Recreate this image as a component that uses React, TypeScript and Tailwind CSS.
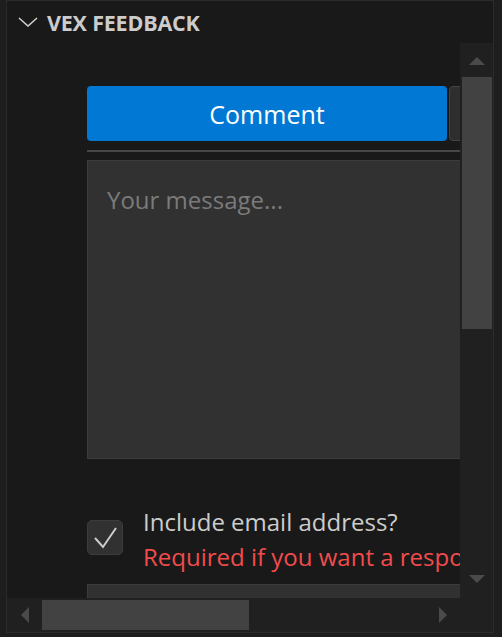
import React from 'react';

const font = { fontFamily: '"Open Sans", "Noto Sans", sans-serif' };

const App: React.FC = () => {
  return (
    <div className="w-[502px] h-[637px] bg-[#1e1e1e] pl-[6px] pr-[8px] pb-[4px] overflow-hidden" style={font}>
      <div className="h-full flex flex-col bg-[#191919] border border-[#2b2b2b]">
        {/* Header */}
        <div className="h-[42px] flex items-center pl-[11px] gap-[9px] shrink-0">
          <svg width="20" height="10" viewBox="0 0 20 10" fill="none">
            <path d="M1 1 L10 9 L19 1" stroke="#cccccc" strokeWidth="1.6" />
          </svg>
          <span className="text-[21.5px] font-bold text-[#cccccc] tracking-[-0.2px] leading-none mt-[1px]">VEX FEEDBACK</span>
        </div>

        {/* Body */}
        <div className="flex-1 flex min-h-0">
          <div className="flex-1 flex flex-col min-w-0">
            <div className="flex-1 overflow-hidden pl-[80px] pt-[43px]">
              <div className="w-[560px]">
                <div className="flex gap-[2px]">
                  <button className="w-[360px] h-[55px] rounded-[4px] bg-[#0078d4] text-white text-[25px] flex items-center justify-center pt-[2px]">
                    Comment
                  </button>
                  <button className="w-[120px] h-[55px] rounded-[4px] bg-[#2e2e2e] border border-[#444444]" />
                </div>
                <div className="mt-[9px] h-[2px] w-[373px] bg-[#474747]" />
                <div className="mt-[8px] h-[299px] w-[400px] bg-[#313131] border border-[#3c3c3c] pl-[19px] pt-[21px] leading-[36px]">
                  <span className="text-[24px] text-[#7b7b7b]">Your message...</span>
                </div>
                <div className="mt-[61px] flex items-start gap-[20px]">
                  <div className="w-[36px] h-[35px] rounded-[5px] bg-[#313131] border border-[#3c3c3c] flex items-center justify-center shrink-0">
                    <svg width="28" height="26" viewBox="0 0 28 26" fill="none">
                      <path d="M4 13 L12 22 L25 3" stroke="#cccccc" strokeWidth="2" strokeLinejoin="miter" />
                    </svg>
                  </div>
                  <div className="flex flex-col -mt-[16px] leading-[35px]">
                    <span className="text-[24px] text-[#cccccc] whitespace-nowrap">Include email address?</span>
                    <span className="text-[24px] text-[#f14c4c] whitespace-nowrap">Required if you want a response</span>
                  </div>
                </div>
                <div className="mt-[10px] h-[40px] w-[400px] bg-[#313131] border border-[#3c3c3c]" />
              </div>
            </div>
            {/* Horizontal scrollbar */}
            <div className="h-[34px] shrink-0 bg-[#202020] flex items-center">
              <div className="w-[35px] flex items-center justify-center">
                <svg width="10" height="16" viewBox="0 0 10 16"><path d="M9 0 L1 8 L9 16 Z" fill="#4a4a4a" /></svg>
              </div>
              <div className="w-[207px] h-[30px] bg-[#424242]" />
              <div className="flex-1" />
              <div className="w-[21px] flex items-center justify-start">
                <svg width="9" height="16" viewBox="0 0 9 16"><path d="M0 0 L8 8 L0 16 Z" fill="#4a4a4a" /></svg>
              </div>
            </div>
          </div>
          {/* Vertical scrollbar */}
          <div className="w-[33px] shrink-0 bg-[#202020] flex flex-col items-center">
            <div className="h-[34px] flex items-center justify-center">
              <svg width="16" height="9" viewBox="0 0 16 9"><path d="M0 9 L8 1 L16 9 Z" fill="#4a4a4a" /></svg>
            </div>
            <div className="w-[30px] h-[252px] bg-[#424242]" />
            <div className="h-[246px]" />
            <svg width="16" height="9" viewBox="0 0 16 9"><path d="M0 0 L8 8 L16 0 Z" fill="#4a4a4a" /></svg>
          </div>
        </div>
      </div>
    </div>
  );
};

export default App;
